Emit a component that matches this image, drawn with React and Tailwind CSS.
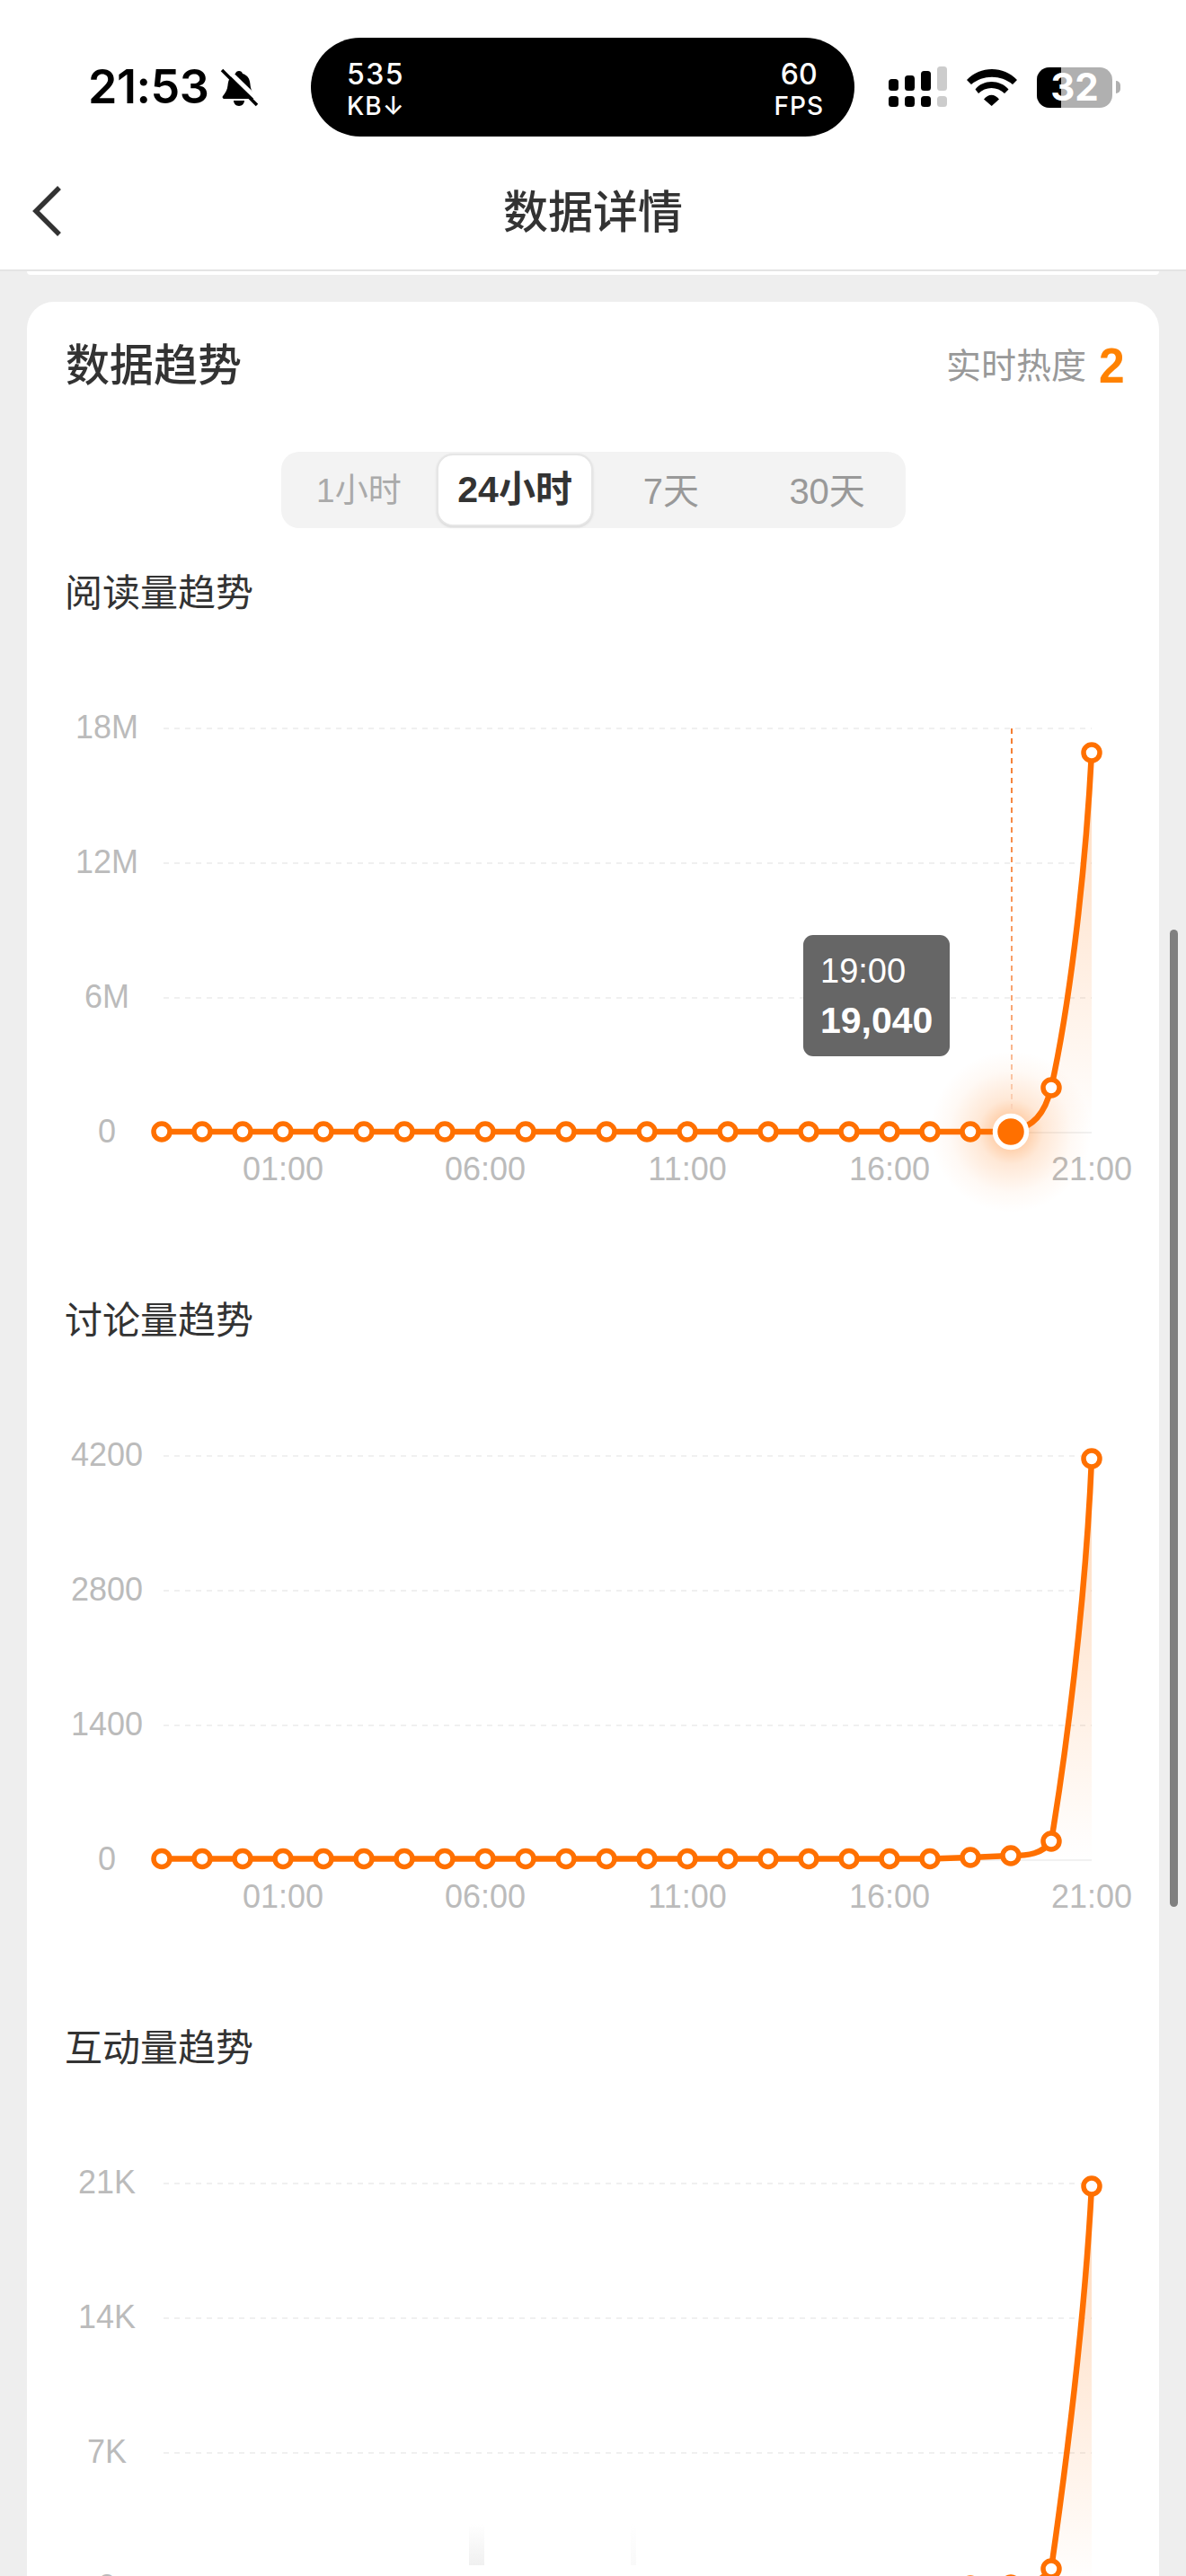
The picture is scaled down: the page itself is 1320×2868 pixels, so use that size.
const ORANGE = '#ff7000';

// y of the flat part of each line, then the hand-fitted tail of the curve
const charts = [
  {
    title: '阅读量趋势',
    labels: ['18M', '12M', '6M', '0'],
    points: [...Array(22).fill(571), 522, 149],
    tail: 'C1120 566 1133 551 1140 522 C1158 441 1177 301 1185 149',
    active: true,
    hours: true,
  },
  {
    title: '讨论量趋势',
    labels: ['4200', '2800', '1400', '0'],
    points: [...Array(20).fill(570.5), 569, 567, 551, 125],
    tail: 'C1115 567 1130 565 1140 551 C1155 461 1178 291 1185 125',
    hours: true,
  },
  {
    // its time axis falls below the captured area
    title: '互动量趋势',
    labels: ['21K', '14K', '7K', '0'],
    points: [...Array(20).fill(571), 570, 569, 551, 125],
    tail: 'C1115 569 1130 565 1140 551 C1160 411 1178 261 1185 125',
  },
];

const hourLabels = ['01:00', '06:00', '11:00', '16:00', '21:00'];
const tabs = ['1小时', '24小时', '7天', '30天'];
const gridY = [122, 272, 422, 572];
const xAt = (i) => 150 + 45 * i;

function Chart({ chart, id }) {
  const { points, labels, tail, active, hours } = chart;
  const flat = points.slice(0, 22).map((y, i) => `${i === 0 ? 'M' : 'L'}${xAt(i)} ${y}`).join(' ');
  const line = `${flat} ${tail}`;
  const area = `M${xAt(21)} ${points[21]} ${tail} L1185 572 L${xAt(21)} 572 Z`;

  return (
    <div className="relative h-[752px]">
      <svg width="1260" height="752" className="block">
        <defs>
          <linearGradient id={`area${id}`} gradientUnits="userSpaceOnUse" x1="0" y1="122" x2="0" y2="572">
            <stop offset="0" stopColor={ORANGE} stopOpacity="0.28" />
            <stop offset="1" stopColor={ORANGE} stopOpacity="0" />
          </linearGradient>
          <linearGradient id={`cursor${id}`} gradientUnits="userSpaceOnUse" x1="0" y1="122" x2="0" y2="552">
            <stop offset="0" stopColor="#f47c30" />
            <stop offset="0.75" stopColor="#f9a877" />
            <stop offset="1" stopColor="#fbd5bd" />
          </linearGradient>
          <radialGradient id={`glow${id}`}>
            <stop offset="0" stopColor={ORANGE} stopOpacity="0.5" />
            <stop offset="0.4" stopColor={ORANGE} stopOpacity="0.16" />
            <stop offset="0.75" stopColor={ORANGE} stopOpacity="0.04" />
            <stop offset="1" stopColor={ORANGE} stopOpacity="0" />
          </radialGradient>
        </defs>

        {gridY.map((y, i) => (
          <line
            key={y}
            x1="152"
            x2="1185"
            y1={y}
            y2={y}
            stroke="#ececec"
            strokeWidth="1.5"
            strokeDasharray={i === 3 ? undefined : '6 6'}
          />
        ))}
        {labels.map((label, i) => (
          <text key={label} x="89" y={gridY[i] + 11} textAnchor="middle" fontSize="36" fill="#bbbbbb">
            {label}
          </text>
        ))}
        {hours && hourLabels.map((h, i) => (
          <text key={h} x={xAt(3 + i * 5)} y="625" textAnchor="middle" fontSize="36" fill="#bbbbbb">
            {h}
          </text>
        ))}

        <path d={area} fill={`url(#area${id})`} />
        {active && (
          <>
            <circle cx="1095" cy="571" r="90" fill={`url(#glow${id})`} />
            <line x1="1096" x2="1096" y1="122" y2="552" stroke={`url(#cursor${id})`} strokeWidth="2" strokeDasharray="6 5" />
          </>
        )}
        <path d={line} fill="none" stroke={ORANGE} strokeWidth="6.5" strokeLinecap="round" />
        {points.map((y, i) =>
          active && i === 21 ? (
            <circle key={i} cx={xAt(i)} cy={y} r="17.5" fill={ORANGE} stroke="#ffffff" strokeWidth="5.5" />
          ) : (
            <circle key={i} cx={xAt(i)} cy={y} r="9" fill="#ffffff" stroke={ORANGE} strokeWidth="5.5" />
          ),
        )}
      </svg>

      {active && (
        <div className="absolute left-[864px] top-[352px] flex h-[135px] w-[163px] flex-col justify-center gap-[16px] rounded-[11px] bg-[#666666] pl-[19px] text-white">
          <div className="text-[38px] leading-[38px]">19:00</div>
          <div className="text-[41px] font-bold leading-[40px]">19,040</div>
        </div>
      )}
    </div>
  );
}

function BellSlash() {
  return (
    <svg width="42" height="43" viewBox="0 0 42 43" className="ml-[14px]">
      <path
        d="M21 3c2 0 3.500 1 4 3 6 2 8 6 8.500 12 .5 6 2.500 9 6 13 1 1.500 0 3-2 3H5c-2 0-3-1.500-2-3 3-3.500 5-7 5.500-12 .5-6 3-11 8.500-13 .5-2 2-3 4-3zM15 36h12c0 3-2.500 6-6 6s-6-3-6-6z"
        fill="#000000"
      />
      <line x1="5" y1="-1" x2="44" y2="37" stroke="#ffffff" strokeWidth="5" />
      <line x1="2" y1="2" x2="41" y2="41" stroke="#000000" strokeWidth="3.500" />
    </svg>
  );
}

function Signal() {
  const bars = [
    { x: 0, top: 14, fill: '#000000' },
    { x: 18, top: 10, fill: '#000000' },
    { x: 36, top: 5, fill: '#000000' },
    { x: 54, top: 0, fill: '#cccccc' },
  ];
  return (
    <svg width="65" height="46" viewBox="0 0 65 46">
      {bars.map((b) => (
        <g key={b.x} fill={b.fill}>
          <rect x={b.x} y={b.top} width="11" height={27 - b.top} rx="3.500" />
          <rect x={b.x} y="33" width="11" height="12" rx="3.500" />
        </g>
      ))}
    </svg>
  );
}

function Wifi() {
  return (
    <svg width="57" height="43" viewBox="0 0 57 43" fill="#000000">
      <path d="M0 13C15-3 41-3 56 13L51 18C38 7 18 7 5 18Z" />
      <path d="M9.500 23.500C18 12 37 12 46.500 23.500L42 28C34 20 21 20 13 28Z" />
      <path d="M19 34.500C24 28 31 28 36 34.500L27.700 42Z" />
    </svg>
  );
}

function Battery() {
  return (
    <div className="flex items-center gap-[4px]">
      <div className="relative flex h-[45px] w-[84px] items-center justify-center rounded-[14px] bg-[#b0b0b0]">
        <div className="absolute inset-y-0 left-0 w-[27px] rounded-l-[14px] bg-black" />
        <span className="relative font-['Inter',sans-serif] text-[42px] font-bold leading-none text-white">32</span>
      </div>
      <div className="h-[14px] w-[5px] rounded-r-[5px] bg-[#b0b0b0]" />
    </div>
  );
}

function StatusBar() {
  return (
    <div className="flex h-[110px] items-center pl-[98px] font-['Inter',sans-serif]">
      <span className="w-[133px] text-[52px] font-semibold leading-none tracking-[-0.5px] text-black">21:53</span>
      <BellSlash />
      <div className="ml-[59px] flex h-[110px] w-[605px] items-center justify-between rounded-[55px] bg-black pl-[40px] pr-[34px] pt-[6px] font-medium text-white">
        <div className="flex flex-col gap-[8px]">
          <span className="text-[32px] leading-[28px] tracking-[1.5px]">535</span>
          <span className="text-[28px] leading-[26px] tracking-[1px]">KB↓</span>
        </div>
        <div className="flex flex-col items-center gap-[8px]">
          <span className="text-[32px] leading-[28px]">60</span>
          <span className="text-[28px] leading-[26px] tracking-[1px]">FPS</span>
        </div>
      </div>
      <div className="ml-[38px] flex items-center">
        <Signal />
        <div className="ml-[22px]"><Wifi /></div>
        <div className="ml-[21px]"><Battery /></div>
      </div>
    </div>
  );
}

export default function App() {
  return (
    <div className="relative h-[2868px] w-[1320px] overflow-hidden bg-[#eeeeee] font-['Liberation_Sans','Noto_Sans_CJK_SC',sans-serif]">
      <div className="h-[302px] border-b-[2px] border-[#e4e4e4] bg-white pt-[42px]">
        <StatusBar />
        <div className="mt-[13px] grid h-[136px] grid-cols-3 items-center pt-[4px]">
          <svg width="40" height="64" viewBox="0 0 40 64" className="ml-[33px]">
            <path d="M33 6 L7 32 L33 58" fill="none" stroke="#333333" strokeWidth="5.500" />
          </svg>
          <div className="pt-[3px] text-center text-[50px] font-medium leading-none text-[#333333]">数据详情</div>
        </div>
      </div>
      <div className="mx-[30px] h-[4px] rounded-b-[30px] bg-white" />

      <div className="mx-[30px] mt-[30px] rounded-t-[30px] bg-white pt-[43px]">
        <div className="flex h-[56px] items-center justify-between px-[43px]">
          <div className="text-[49px] font-medium leading-none text-[#333333]">数据趋势</div>
          <div className="flex items-center gap-[13px]">
            <span className="text-[39px] leading-none text-[#999999]">实时热度</span>
            <span className="w-[25px] scale-x-[0.92] text-center text-[56px] font-bold leading-none text-[#ff8200]">2</span>
          </div>
        </div>

        <div className="mx-auto mt-[68px] grid h-[85px] w-[695px] grid-cols-4 rounded-[20px] bg-[#f3f3f3]">
          {tabs.map((tab, i) => (
            <div
              key={tab}
              className={
                i === 1
                  ? 'my-[2px] flex items-center justify-center rounded-[18px] border-[2px] border-[#e6e6e6] bg-white pt-[1px] text-[41px] font-bold text-[#333333] shadow-sm'
                  : i === 0
                    ? 'flex items-center justify-center pt-[3px] text-[37px] text-[#aaaaaa]'
                    : 'flex items-center justify-center pt-[3px] text-[40px] text-[#999999]'
              }
            >
              {tab}
            </div>
          ))}
        </div>

        <div className="mt-[43px]">
          {charts.map((chart, i) => (
            <section key={chart.title}>
              <div className="flex h-[58px] items-center px-[42px] pt-[2px] text-[42px] leading-none text-[#333333]">{chart.title}</div>
              <Chart chart={chart} id={i} />
            </section>
          ))}
        </div>
      </div>

      {/* scroll indicator and the faint smudges at the bottom of the capture */}
      <div className="absolute left-[1302px] top-[1035px] h-[1088px] w-[9px] rounded-full bg-[#808080]" />
      <div className="absolute left-[522px] top-[2810px] h-[46px] w-[17px] bg-gradient-to-b from-transparent to-[#f0f0f0]" />
      <div className="absolute left-[702px] top-[2810px] h-[46px] w-[6px] bg-gradient-to-b from-transparent to-[#f9f9f9]" />
    </div>
  );
}
